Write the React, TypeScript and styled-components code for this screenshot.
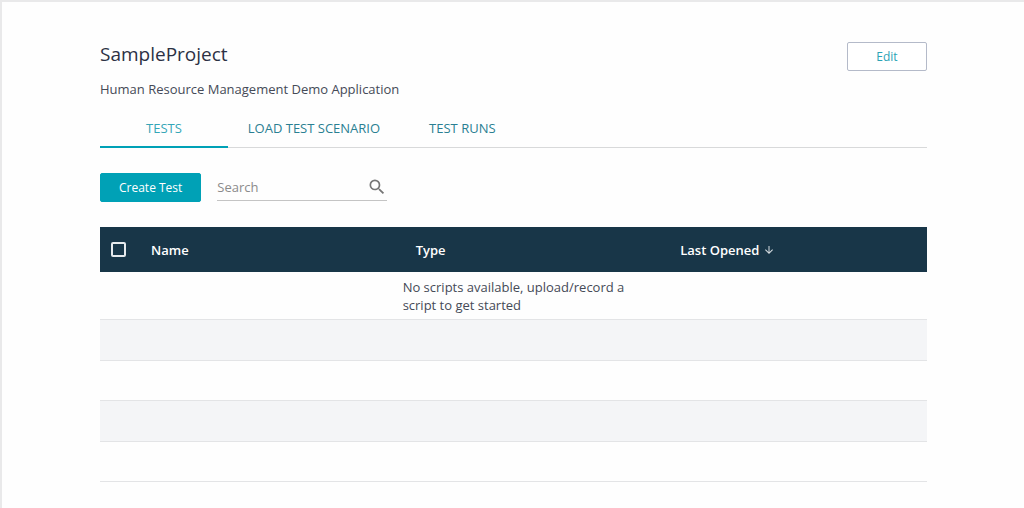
import React from "react";
import styled, { createGlobalStyle } from "styled-components";

const GlobalStyle = createGlobalStyle`
  *, *::before, *::after { box-sizing: border-box; }
  body {
    margin: 0;
    background: #fefefe;
    color: #454a57;
    font-family: "Open Sans", "Noto Sans", sans-serif;
    font-size: 13px;
    line-height: 18px;
  }
  button, input { font: inherit; }
`;

const Page = styled.main`
  min-height: 100vh;
  padding: 40px 97px 24px 98px;
  border-top: 2px solid #e9e9ea;
  border-left: 2px solid #e9e9ea;
`;

const Header = styled.header`
  display: flex;
  justify-content: space-between;
  align-items: flex-start;
`;

const Title = styled.h1`
  margin: 0;
  color: #2c3144;
  font-size: 19px;
  font-weight: 400;
  line-height: 24px;
`;

const Description = styled.p`
  margin: 9px 0 0;
`;

const Button = styled.button<{ $primary?: boolean }>`
  height: 29px;
  padding: 0 18px;
  border: 1px solid ${(p) => (p.$primary ? "#00a1b6" : "#b4bac9")};
  border-radius: 2px;
  background: ${(p) => (p.$primary ? "#00a1b6" : "#fff")};
  color: ${(p) => (p.$primary ? "#fff" : "#2ba3b5")};
  font-size: 12px;
  min-width: 80px;
  cursor: pointer;
`;

const Tabs = styled.nav`
  display: flex;
  margin-top: 9px;
  border-bottom: 1px solid #d8d9da;
`;

const Tab = styled.a<{ $active?: boolean }>`
  height: 41px;
  padding: 12px ${(p) => (p.$active ? 46 : 20)}px 0;
  margin: 0 ${(p) => (p.$active ? 0 : 9)}px -1px 0;
  border-bottom: 2px solid ${(p) => (p.$active ? "#00a1b6" : "transparent")};
  color: ${(p) => (p.$active ? "#35a6b7" : "#2a7f92")};
  text-decoration: none;
`;

const Toolbar = styled.div`
  display: flex;
  gap: 16px;
  margin: 25px 0;
`;

const SearchField = styled.label`
  display: flex;
  align-items: center;
  width: 170px;
  height: 28px;
  border-bottom: 1px solid #c4c4c4;
`;

const SearchInput = styled.input`
  flex: 1;
  min-width: 0;
  padding: 0;
  border: 0;
  outline: 0;
  background: transparent;
  color: #454a57;
  &::placeholder { color: #8b8b8b; opacity: 1; }
`;

const SearchIcon = styled.svg`
  width: 20px;
  height: 20px;
  fill: #757575;
`;

const Table = styled.table`
  width: 100%;
  table-layout: fixed;
  border-collapse: separate;
  border-spacing: 0;
`;

const SelectColumn = styled.col`
  width: 38px;
`;

const DataColumn = styled.col`
  width: 32%;
`;

const HeadCell = styled.th`
  height: 45px;
  padding: 0 13px;
  background: #183648;
  color: #fff;
  font-weight: 600;
  text-align: left;
`;

const SelectHead = styled(HeadCell)`
  padding: 0 0 0 11px;
`;

const Checkbox = styled.input`
  display: block;
  appearance: none;
  width: 15px;
  height: 15px;
  margin: 0;
  border: 2px solid #e6eaed;
  border-radius: 2px;
  &:checked { background: #00a1b6; }
`;

const SortButton = styled.button`
  display: flex;
  align-items: center;
  gap: 4px;
  padding: 0;
  border: 0;
  background: none;
  color: inherit;
  font-weight: 600;
  white-space: nowrap;
`;

const SortIcon = styled.svg`
  width: 12px;
  height: 12px;
  fill: #d5dce0;
`;

const Row = styled.tr`
  height: 40px;
  &:first-child { height: 48px; }
  &:nth-child(even) {
    height: 41px;
    background: #f4f5f7;
  }
`;

const Cell = styled.td`
  padding: 0 13px 0 0;
  border-bottom: 1px solid #e3e4e6;
`;

const columns = [0, 1, 2, 3];
const emptyRows = [1, 2, 3, 4];

export default function App() {
  return (
    <>
      <GlobalStyle />
      <Page>
        <Header>
          <Title>SampleProject</Title>
          <Button type="button">Edit</Button>
        </Header>
        <Description>Human Resource Management Demo Application</Description>
        <Tabs aria-label="Project sections">
          <Tab href="#tests" $active aria-current="page">TESTS</Tab>
          <Tab href="#scenario">LOAD TEST SCENARIO</Tab>
          <Tab href="#runs">TEST RUNS</Tab>
        </Tabs>
        <Toolbar>
          <Button type="button" $primary>Create Test</Button>
          <SearchField>
            <SearchInput type="text" placeholder="Search" aria-label="Search" />
            <SearchIcon viewBox="0 0 24 24" aria-hidden="true">
              <path d="M15.5 14h-.79l-.28-.27A6.47 6.47 0 0 0 16 9.5 6.5 6.5 0 1 0 9.5 16c1.61 0 3.09-.59 4.23-1.57l.27.28v.79l5 4.99L20.49 19l-4.99-5zm-6 0C7.01 14 5 11.99 5 9.5S7.01 5 9.5 5 14 7.01 14 9.5 11.99 14 9.5 14z" />
            </SearchIcon>
          </SearchField>
        </Toolbar>
        <Table>
          <colgroup>
            <SelectColumn />
            <DataColumn />
            <DataColumn />
            <col />
          </colgroup>
          <thead>
            <tr>
              <SelectHead scope="col">
                <Checkbox type="checkbox" aria-label="Select all" />
              </SelectHead>
              <HeadCell scope="col">Name</HeadCell>
              <HeadCell scope="col">Type</HeadCell>
              <HeadCell scope="col" aria-sort="descending">
                <SortButton type="button">
                  Last Opened
                  <SortIcon viewBox="0 0 24 24" aria-hidden="true">
                    <path d="M20 12l-1.41-1.41L13 16.17V4h-2v12.17l-5.58-5.59L4 12l8 8 8-8z" />
                  </SortIcon>
                </SortButton>
              </HeadCell>
            </tr>
          </thead>
          <tbody>
            <Row>
              <Cell />
              <Cell />
              <Cell>No scripts available, upload/record a script to get started</Cell>
              <Cell />
            </Row>
            {emptyRows.map((row) => (
              <Row key={row}>
                {columns.map((column) => (
                  <Cell key={column} />
                ))}
              </Row>
            ))}
          </tbody>
        </Table>
      </Page>
    </>
  );
}
